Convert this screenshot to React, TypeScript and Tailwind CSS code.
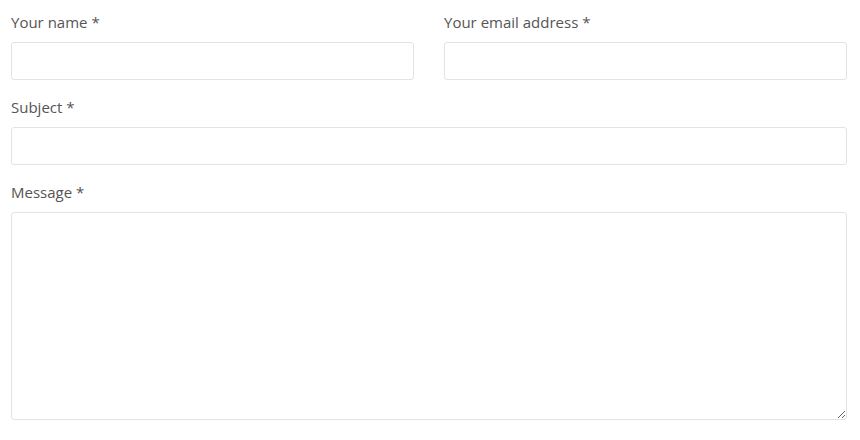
export default function App() {
  const label = "block text-[15px] leading-6 text-[#555] mb-2";
  const field =
    "block w-full h-[38px] rounded-[3px] border border-[#e3e3e3] bg-white px-3 text-[15px] outline-none";

  return (
    <div className="bg-white w-[860px] h-[440px] pt-[10px] pl-[11px] font-['Open_Sans',sans-serif]">
      <form className="w-[836px] flex flex-col gap-[15px]">
        <div className="grid grid-cols-2 gap-[30px]">
          <div>
            <label className={label}>Your name *</label>
            <input type="text" className={field} />
          </div>
          <div>
            <label className={label}>Your email address *</label>
            <input type="email" className={field} />
          </div>
        </div>

        <div>
          <label className={label}>Subject *</label>
          <input type="text" className={field} />
        </div>

        <div>
          <label className={label}>Message *</label>
          <textarea className="block w-full h-[208px] rounded-[3px] border border-[#e3e3e3] bg-white px-3 py-2 text-[15px] outline-none" />
        </div>
      </form>
    </div>
  );
}
